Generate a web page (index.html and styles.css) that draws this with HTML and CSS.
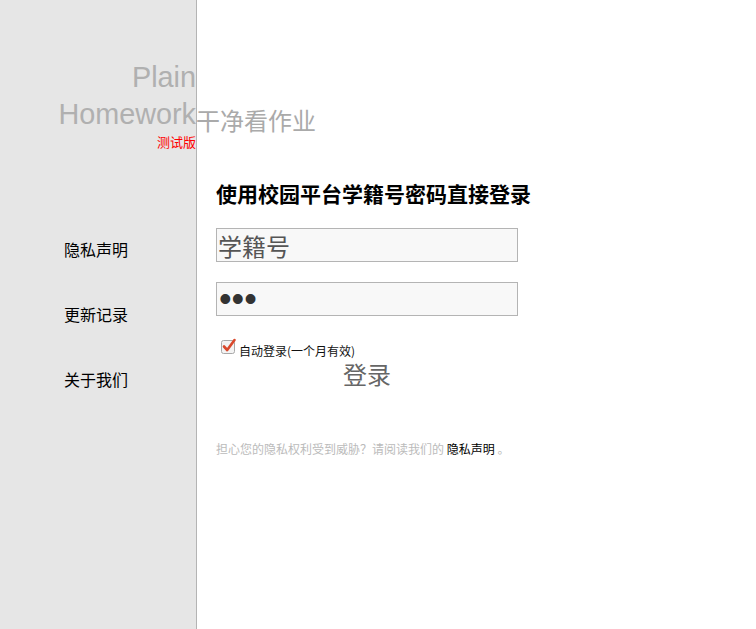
FILE: index.html
```html
<!DOCTYPE html>
<html lang="zh-CN">
<head>
<meta charset="utf-8">
<title>Plain Homework 干净看作业</title>
<link rel="stylesheet" href="styles.css">
</head>
<body>
<div class="page">
  <aside class="sidebar">
    <div class="logo">
      <div class="logo-line">Plain</div>
      <div class="logo-line"><span class="logo-word">Homework<span class="logo-cn">干净看作业</span></span></div>
      <div class="beta">测试版</div>
    </div>
    <ul class="nav">
      <li><a href="#">隐私声明</a></li>
      <li><a href="#">更新记录</a></li>
      <li><a href="#">关于我们</a></li>
    </ul>
  </aside>
  <main class="main">
    <h2 class="title">使用校园平台学籍号密码直接登录</h2>
    <form class="form">
      <input class="field" type="text" placeholder="学籍号">
      <input class="field field-pw" type="password" value="abc">
      <label class="remember">
        <svg class="check" width="16" height="16" viewBox="0 0 16 16">
          <rect x="0.5" y="2.5" width="13" height="13" rx="2" fill="#f3f3f3" stroke="#a8a8a8"/>
          <path d="M3 8.5 L6.2 12 L13.5 2" fill="none" stroke="#d9482c" stroke-width="2.6" stroke-linecap="round" stroke-linejoin="round"/>
        </svg>
        <span class="remember-text">自动登录(一个月有效)</span>
      </label>
      <button class="submit" type="button">登录</button>
    </form>
    <p class="notice">担心您的隐私权利受到威胁？请阅读我们的 <a href="#">隐私声明</a> 。</p>
  </main>
</div>
</body>
</html>
```
FILE: styles.css
```css
html, body {
  margin: 0;
  padding: 0;
  background: #fff;
}
body {
  font-family: "Liberation Sans", "Noto Sans CJK SC", sans-serif;
  color: #000;
}
.page {
  display: flex;
  height: 629px;
}
.sidebar {
  width: 196px;
  flex: 0 0 196px;
  background: #e6e6e6;
  border-right: 1px solid #b4b4b4;
}
.logo {
  padding-top: 59px;
  text-align: right;
}
.logo-line {
  font-family: "Liberation Sans", sans-serif;
  font-size: 28.8px;
  line-height: 37px;
  color: #b0b0b0;
}
.logo-word {
  position: relative;
}
.logo-cn {
  position: absolute;
  left: 100%;
  top: 5px;
  font-family: "Noto Sans CJK SC", sans-serif;
  font-size: 24px;
  line-height: 34px;
  white-space: nowrap;
  color: #aaa;
}
.beta {
  font-family: "Noto Sans CJK SC", sans-serif;
  font-size: 13px;
  line-height: 18px;
  color: #f00;
}
.nav {
  list-style: none;
  margin: 66px 0 0;
  padding: 0 0 0 64px;
}
.nav li {
  height: 65px;
  line-height: 65px;
  font-family: "Noto Sans CJK SC", sans-serif;
  font-size: 16px;
}
.nav a {
  color: #000;
  text-decoration: none;
}
.main {
  flex: 1;
  padding: 178px 0 0 19px;
}
.title {
  margin: 0;
  font-family: "Noto Sans CJK SC", sans-serif;
  font-size: 21px;
  line-height: 30px;
  font-weight: bold;
}
.form {
  width: 302px;
  display: flex;
  flex-direction: column;
  margin-top: 20px;
}
.field {
  box-sizing: border-box;
  width: 302px;
  height: 34px;
  margin: 0 0 20px;
  padding: 0 1px;
  border: 1px solid #b4b4b4;
  background: #f8f8f8;
  font-family: "Noto Sans CJK SC", sans-serif;
  font-size: 24px;
  color: #333;
  outline: none;
}
.field::placeholder {
  color: #555;
}
.field-pw {
  margin-bottom: 0;
  padding-left: 2px;
  font-family: "Liberation Sans", sans-serif;
  font-size: 36px;
}
.remember {
  display: flex;
  align-items: flex-start;
  margin: 22px 0 0 5px;
  height: 18px;
  font-family: "Noto Sans CJK SC", sans-serif;
  font-size: 12px;
  color: #111;
}
.check {
  margin-right: 2px;
}
.remember-text {
  margin-top: 5px;
  line-height: 16px;
}
.submit {
  align-self: center;
  margin-top: 4px;
  padding: 0;
  border: 0;
  background: none;
  font-family: "Noto Sans CJK SC", sans-serif;
  font-size: 24px;
  line-height: 28px;
  color: #666;
}
.notice {
  margin: 53px 0 0;
  font-family: "Noto Sans CJK SC", sans-serif;
  font-size: 12px;
  line-height: 16px;
  color: #bbb;
}
.notice a {
  color: #000;
  text-decoration: none;
}
```
